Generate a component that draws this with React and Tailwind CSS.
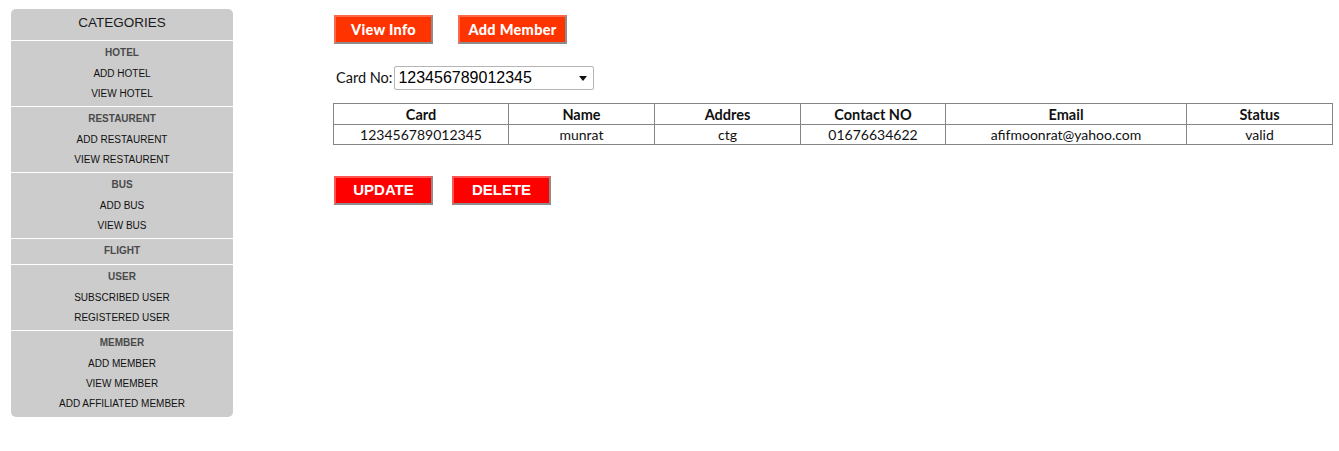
import React from "react";

const sections = [
  { title: "HOTEL", items: ["ADD HOTEL", "VIEW HOTEL"] },
  { title: "RESTAURENT", items: ["ADD RESTAURENT", "VIEW RESTAURENT"] },
  { title: "BUS", items: ["ADD BUS", "VIEW BUS"] },
  { title: "FLIGHT", items: [] },
  { title: "USER", items: ["SUBSCRIBED USER", "REGISTERED USER"] },
  { title: "MEMBER", items: ["ADD MEMBER", "VIEW MEMBER", "ADD AFFILIATED MEMBER"] },
];

const cols = [
  { h: "Card", v: "123456789012345", w: "w-[175px]" },
  { h: "Name", v: "munrat", w: "w-[146px]" },
  { h: "Addres", v: "ctg", w: "w-[146px]" },
  { h: "Contact NO", v: "01676634622", w: "w-[145px]" },
  { h: "Email", v: "afifmoonrat@yahoo.com", w: "w-[241px]" },
  { h: "Status", v: "valid", w: "w-[146px]" },
];

function Sidebar() {
  return (
    <div className="w-[222px] shrink-0 rounded-[5px] bg-[#cccccc] pb-[3px] font-['Liberation_Sans',Arial,sans-serif] text-center">
      <div className="h-[31px] pt-[6px] text-[13.5px] leading-[16px] text-[#1a1a1a]">CATEGORIES</div>
      {sections.map((s, i) => (
        <div key={s.title}>
          <div className="h-px bg-white" />
          <div className={`pt-[2px] ${i === sections.length - 1 ? "" : "pb-[2px]"}`}>
            <div className="h-[21px] text-[10px] font-bold leading-[20px] text-[#4a4a4a]">{s.title}</div>
            {s.items.map((it) => (
              <div key={it} className="h-[20px] text-[10px] leading-[20px] text-[#111]">{it}</div>
            ))}
          </div>
        </div>
      ))}
    </div>
  );
}

function OrangeBtn({ children, w }) {
  return (
    <div
      className={`${w} h-[29px] flex items-center justify-center bg-[#ff3300] border-2 border-t-[#ff6a4a] border-l-[#ff6a4a] border-r-[#8c8c8c] border-b-[#8c8c8c] text-white font-black text-[14.5px] tracking-[0.3px] font-['Lato',sans-serif]`}
    >
      {children}
    </div>
  );
}

function RedBtn({ children }) {
  return (
    <div className="w-[99px] h-[29px] flex items-center justify-center bg-[#ff0000] border-2 border-t-[#ff5555] border-l-[#ff5555] border-r-[#8c8c8c] border-b-[#8c8c8c] text-white font-bold text-[15px] font-['Liberation_Sans',Arial,sans-serif]">
      {children}
    </div>
  );
}

export default function App() {
  return (
    <div className="w-[1339px] h-[451px] bg-white flex items-start pl-[11px] pt-[9px]">
      <Sidebar />
      <div className="ml-[100px] pt-[6px] font-['Lato',sans-serif] text-[#111]">
        <div className="flex gap-[25px] pl-px">
          <OrangeBtn w="w-[99px]">View Info</OrangeBtn>
          <OrangeBtn w="w-[109px]">Add Member</OrangeBtn>
        </div>
        <div className="mt-[22px] flex items-center pl-[3px]">
          <span className="text-[14.5px] mr-[2px]">Card No:</span>
          <div className="w-[200px] h-[24px] border border-[#b5b5b5] rounded-[2px] flex items-center justify-between pl-[3px] pr-[6px] bg-white">
            <span className="font-['Liberation_Sans',Arial,sans-serif] text-[16px] text-black">123456789012345</span>
            <svg width="8" height="5" viewBox="0 0 8 5"><path d="M0 0h8L4 5z" fill="#111" /></svg>
          </div>
        </div>
        <table className="mt-[13px] border-collapse">
          <thead>
            <tr>
              {cols.map((c) => (
                <th key={c.h} className={`${c.w} h-[21px] p-0 border border-[#858585] text-[14.5px] font-bold leading-[19px] text-center`}>{c.h}</th>
              ))}
            </tr>
          </thead>
          <tbody>
            <tr>
              {cols.map((c) => (
                <td key={c.h} className="h-[20px] p-0 border border-[#858585] text-[14px] leading-[18px] text-center">{c.v}</td>
              ))}
            </tr>
          </tbody>
        </table>
        <div className="mt-[31px] flex gap-[19px] pl-px">
          <RedBtn>UPDATE</RedBtn>
          <RedBtn>DELETE</RedBtn>
        </div>
      </div>
    </div>
  );
}
